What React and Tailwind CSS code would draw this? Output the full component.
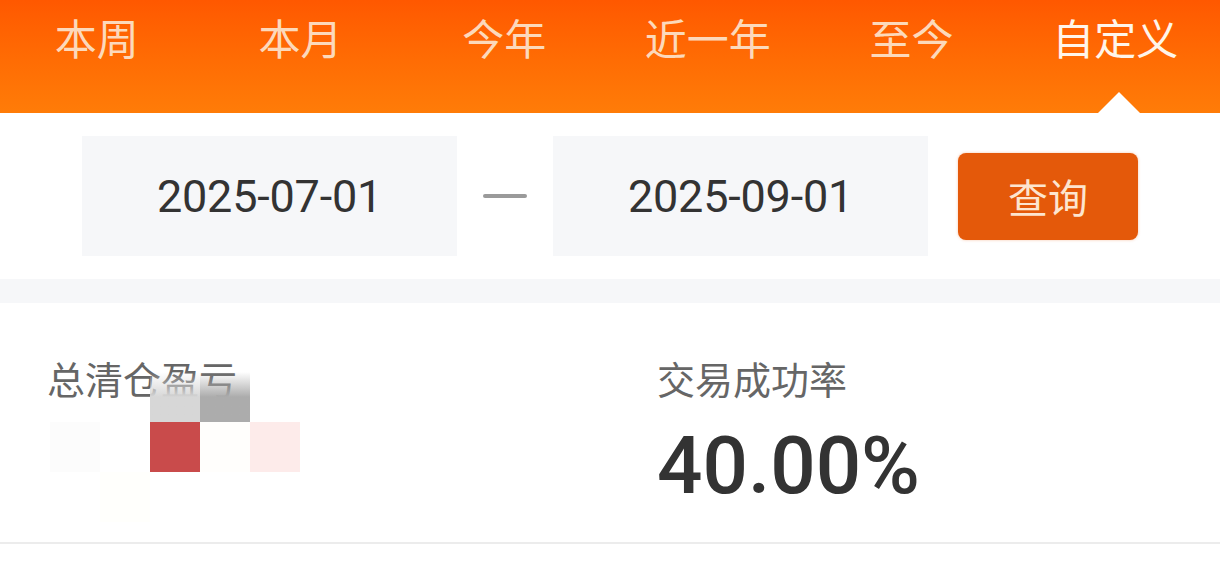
import React from "react";

const tabs = ["本周", "本月", "今年", "近一年", "至今", "自定义"];
const cjk = { fontFamily: '"Noto Sans CJK SC", "Noto Sans", sans-serif' };
const num = { fontFamily: 'Roboto, "Noto Sans CJK SC", sans-serif' };

export default function App() {
  return (
    <div className="w-[1220px] h-[572px] bg-white overflow-hidden" style={cjk}>
      {/* Header tabs */}
      <div className="h-[113px] bg-linear-to-b from-[#ff5800] to-[#ff7c08] overflow-hidden">
        <div className="grid grid-cols-6 w-[1222px] -ml-[5px] h-full">
          {tabs.map((t, i) => (
            <div key={t} className="relative flex justify-center pt-[16px]">
              <span
                className={
                  "text-[42px] leading-none " +
                  (i === 5 ? "text-[#fff5ea]" : "text-[#fcd9bb]")
                }
              >
                {t}
              </span>
              {i === 5 && (
                <div className="absolute bottom-0 left-1/2 -translate-x-1/2 ml-[4px] w-0 h-0 border-l-[21px] border-r-[21px] border-b-[21px] border-l-transparent border-r-transparent border-b-white" />
              )}
            </div>
          ))}
        </div>
      </div>

      {/* Date range row */}
      <div className="h-[166px] flex items-center px-[82px]">
        <div className="w-[375px] h-[120px] bg-[#f6f7f9] flex items-center justify-center">
          <span className="text-[45px] leading-none text-[#333333] tracking-[-0.2px]" style={num}>
            2025-07-01
          </span>
        </div>
        <div className="w-[96px] flex justify-center">
          <div className="w-[44px] h-[4px] rounded-full bg-[#9a9a9a]" />
        </div>
        <div className="w-[375px] h-[120px] bg-[#f6f7f9] flex items-center justify-center">
          <span className="text-[45px] leading-none text-[#333333] tracking-[-0.2px]" style={num}>
            2025-09-01
          </span>
        </div>
        <button className="ml-[30px] w-[180px] h-[87px] rounded-[8px] bg-[#e4590a] flex items-center justify-center shadow-[0_0_3px_rgba(228,89,10,0.35)]">
          <span className="text-[40px] leading-none text-[#fde5cf]">查询</span>
        </button>
      </div>

      {/* Divider band */}
      <div className="h-[24px] bg-[#f6f7f9]" />

      {/* Stats */}
      <div className="grid grid-cols-2 h-[239px]">
        <div className="relative pl-[47px] pt-[56px]">
          <div className="text-[38px] leading-none text-[#666666]">总清仓盈亏</div>
          <div className="mt-[29px] h-[80px]" />
          {/* mosaic overlay */}
          <div className="absolute left-[50px] top-[69px] grid grid-cols-5 grid-rows-3">
            <div className="w-[50px] h-[50px]" />
            <div className="w-[50px] h-[50px]" />
            <div className="w-[50px] h-[50px] bg-linear-to-b from-white/0 from-0% to-[#d7d7d7] to-50%" />
            <div className="w-[50px] h-[50px] bg-linear-to-b from-white/0 from-0% to-[#acacac] to-50%" />
            <div className="w-[50px] h-[50px]" />
            <div className="w-[50px] h-[50px] bg-[#fcfcfc]" />
            <div className="w-[50px] h-[50px]" />
            <div className="w-[50px] h-[50px] bg-[#c94b4b]" />
            <div className="w-[50px] h-[50px] bg-[#fffefc]" />
            <div className="w-[50px] h-[50px] bg-[#fdebea]" />
            <div className="w-[50px] h-[50px]" />
            <div className="w-[50px] h-[50px] bg-[#fffffc]" />
            <div className="w-[50px] h-[50px]" />
            <div className="w-[50px] h-[50px]" />
            <div className="w-[50px] h-[50px]" />
          </div>
        </div>
        <div className="pl-[47px] pt-[56px]">
          <div className="text-[38px] leading-none text-[#666666]">交易成功率</div>
          <div
            className="mt-[29px] text-[80px] leading-none font-medium text-[#333333]"
            style={num}
          >
            40.00%
          </div>
        </div>
      </div>
      <div className="h-[2px] bg-[#ececec]" />
    </div>
  );
}
